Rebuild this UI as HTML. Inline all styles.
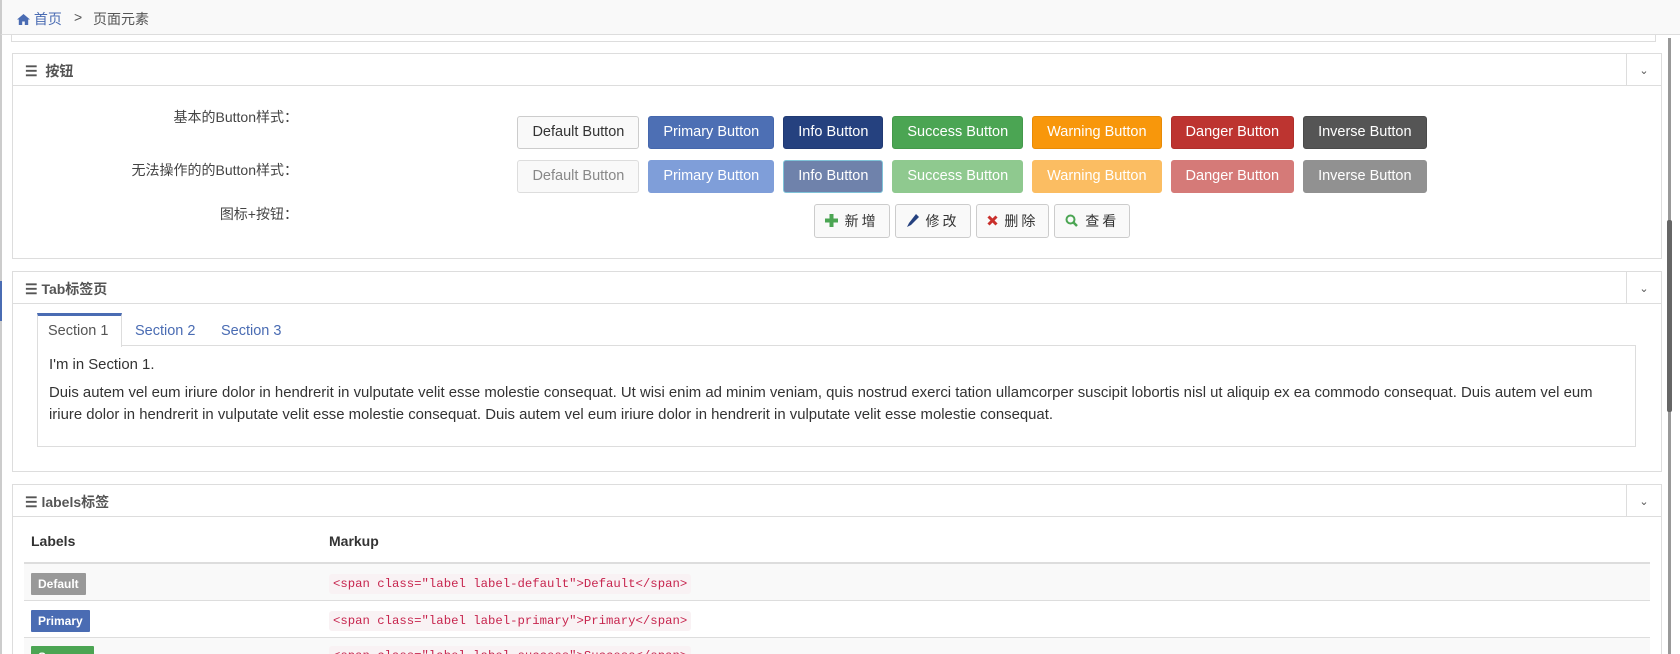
<!DOCTYPE html>
<html><head><meta charset="utf-8">
<style>
*{box-sizing:border-box;margin:0;padding:0}
html{height:654px;overflow:hidden}
body{width:1680px;height:654px;overflow:hidden;background:#fff;font-family:"Liberation Sans","Noto Sans CJK SC",sans-serif;font-size:14px;color:#333;position:relative}
.abs{position:absolute}
.bc{left:0;top:0;width:1680px;height:35px;background:#f9f9f9;border-bottom:1px solid #ddd;border-left:2px solid #ccc}
.bc span{position:absolute;top:9px;font-size:14px}
.leftline{left:0;top:35px;width:2px;height:619px;background:#ccc}
.leftblue{left:0;top:281px;width:2px;height:40px;background:#4a6cb3}
.panel{position:absolute;left:12px;width:1650px;border:1px solid #ddd;background:#fff}
.ph{height:32px;border-bottom:1px solid #ddd;position:relative}
.ph .t{position:absolute;left:12px;top:7px;font-weight:bold;color:#555;font-size:14px}
.ph .c{position:absolute;right:0;top:0;width:35px;height:31px;border-left:1px solid #ddd;color:#555;text-align:center;font-size:11px;line-height:34px}
.lbl{position:absolute;width:298px;text-align:right;font-size:14px;color:#444}
.row{position:absolute;left:310px;width:1324px;display:flex;justify-content:center;gap:9px}
.btn{height:33px;padding:0 14px;border-radius:3px;border:1px solid transparent;color:#fff;font-size:14.5px;line-height:31px;white-space:nowrap}
.d{background:#f9f9f9;border-color:#ccc;color:#333}
.p{background:#4d6fb4;border-color:#4567ad}
.i{background:#25417f;border-color:#213a73}
.s{background:#4ba553;border-color:#44994b}
.w{background:#f8970b;border-color:#e88b06}
.dg{background:#bd3430;border-color:#b02f2b}
.iv{background:#555;border-color:#4a4a4a}
.dis .d{color:#888;border-color:#ddd}
.dis .p{background:#7f9ed9;border-color:#7f9ed9}
.dis .i{background:#6f82ab;border-color:#7fc3d8}
.dis .s{background:#8fc98f;border-color:#8fc98f}
.dis .w{background:#fbbd62;border-color:#fbbd62}
.dis .dg{background:#d57a78;border-color:#d57a78}
.dis .iv{background:#919191;border-color:#919191}
.ib{height:34px;padding:0 10px;border:1px solid #ccc;border-radius:3px;background:#f9f9f9;line-height:32px;font-size:14px;letter-spacing:3px;color:#333;white-space:nowrap}
.tab{position:absolute;top:0;height:33px;line-height:32px;font-size:14.5px;color:#4a6cb3;white-space:nowrap}
.tabbox{position:absolute;left:37px;top:346px;width:1599px;height:101px;border:1px solid #ddd;padding:8px 11px;font-size:14.9px;color:#333;line-height:22px}
.lab{display:inline-block;color:#fff;font-weight:bold;font-size:12px;padding:0 7px;height:22px;line-height:22px;border-radius:1px}
code{font-family:"Liberation Mono",monospace;font-size:12.3px;color:#c7254e;background:#f9f2f4;padding:3px 4px;border-radius:3px}
</style></head><body>
<div class="abs bc">
 <span style="left:15px;color:#4a6cb3"><svg width="13" height="11" viewBox="0 0 13 11" style="vertical-align:-1px"><path d="M6.5 0L0 5.5h1.8V11h3.4V7.5h2.6V11h3.4V5.5H13z" fill="#4a6cb3"/></svg> 首页</span>
 <span style="left:72px;color:#555">&gt;</span>
 <span style="left:91px;color:#555">页面元素</span>
</div>
<div class="abs leftline"></div>
<div class="abs leftblue"></div>
<div class="abs" style="left:11px;top:35px;width:1645px;height:7px;border:1px solid #ddd;border-top:none"></div>
<div class="abs" style="left:1668px;top:38px;width:3px;height:616px;background:#999"></div>
<div class="abs" style="left:1667px;top:220px;width:5px;height:192px;background:#666;border-radius:2px"></div>

<div class="panel" style="top:53px;height:206px">
 <div class="ph"><span class="t">☰&nbsp; 按钮</span><span class="c">⌄</span></div>
</div>
<div class="lbl" style="top:107px">基本的Button样式：</div>
<div class="lbl" style="top:160px">无法操作的的Button样式：</div>
<div class="lbl" style="top:204px">图标+按钮：</div>
<div class="row" style="top:116px">
 <div class="btn d">Default Button</div><div class="btn p">Primary Button</div><div class="btn i">Info Button</div><div class="btn s">Success Button</div><div class="btn w">Warning Button</div><div class="btn dg">Danger Button</div><div class="btn iv">Inverse Button</div>
</div>
<div class="row dis" style="top:160px">
 <div class="btn d">Default Button</div><div class="btn p">Primary Button</div><div class="btn i">Info Button</div><div class="btn s">Success Button</div><div class="btn w">Warning Button</div><div class="btn dg">Danger Button</div><div class="btn iv">Inverse Button</div>
</div>
<div class="row" style="top:204px;gap:5px">
 <div class="ib"><svg width="13" height="13" viewBox="0 0 13 13" style="vertical-align:-1px"><path d="M4.5 0h4v4.5H13v4H8.5V13h-4V8.5H0v-4h4.5z" fill="#4ba553"/></svg> 新增</div>
 <div class="ib"><svg width="13" height="13" viewBox="0 0 13 13" style="vertical-align:-1px"><path d="M10 0l3 3-8 8-4 2 2-4z" fill="#25417f"/></svg> 修改</div>
 <div class="ib"><svg width="11" height="11" viewBox="0 0 11 11" style="vertical-align:0"><path d="M1.5 1.5l8 8M9.5 1.5l-8 8" stroke="#c9302c" stroke-width="3"/></svg> 删除</div>
 <div class="ib"><svg width="13" height="13" viewBox="0 0 13 13" style="vertical-align:-1px"><circle cx="5.5" cy="5.5" r="4" stroke="#4ba553" stroke-width="2" fill="none"/><path d="M8.5 8.5l3.5 3.5" stroke="#4ba553" stroke-width="2.5"/></svg> 查看</div>
</div>

<div class="panel" style="top:271px;height:201px">
 <div class="ph"><span class="t">☰ Tab标签页</span><span class="c">⌄</span></div>
</div>
<div class="abs" style="left:37px;top:345px;width:1599px;height:1px;background:#ddd"></div>
<div class="abs" style="left:37px;top:313px;width:85px;height:34px;border:1px solid #ddd;border-top:3px solid #4a6cb3;border-bottom:none;background:#fff"></div>
<div class="tab" style="left:48px;top:315px;color:#555">Section 1</div>
<div class="tab" style="left:135px;top:315px">Section 2</div>
<div class="tab" style="left:221px;top:315px">Section 3</div>
<div class="tabbox" style="border-top:none">
 <p style="margin-bottom:6px">I'm in Section 1.</p>
 <p>Duis autem vel eum iriure dolor in hendrerit in vulputate velit esse molestie consequat. Ut wisi enim ad minim veniam, quis nostrud exerci tation ullamcorper suscipit lobortis nisl ut aliquip ex ea commodo consequat. Duis autem vel eum iriure dolor in hendrerit in vulputate velit esse molestie consequat. Duis autem vel eum iriure dolor in hendrerit in vulputate velit esse molestie consequat.</p>
</div>

<div class="panel" style="top:484px;height:170px;border-bottom:none">
 <div class="ph"><span class="t">☰ labels标签</span><span class="c">⌄</span></div>
</div>
<div class="abs" style="left:31px;top:533px;font-weight:bold;font-size:14px">Labels</div>
<div class="abs" style="left:329px;top:533px;font-weight:bold;font-size:14px">Markup</div>
<div class="abs" style="left:24px;top:562px;width:1626px;height:2px;background:#ddd"></div>
<div class="abs" style="left:24px;top:564px;width:1626px;height:37px;background:#f9f9f9;border-bottom:1px solid #ddd"></div>
<div class="abs" style="left:24px;top:601px;width:1626px;height:37px;border-bottom:1px solid #ddd"></div>
<div class="abs" style="left:24px;top:638px;width:1626px;height:16px;background:#f9f9f9"></div>
<div class="abs" style="left:31px;top:573px"><span class="lab" style="background:#999">Default</span></div>
<div class="abs" style="left:31px;top:610px"><span class="lab" style="background:#4a6cb3">Primary</span></div>
<div class="abs" style="left:31px;top:646px;height:8px;overflow:hidden"><span class="lab" style="background:#4ba553">Success</span></div>
<div class="abs" style="left:329px;top:574px"><code>&lt;span class="label label-default"&gt;Default&lt;/span&gt;</code></div>
<div class="abs" style="left:329px;top:611px"><code>&lt;span class="label label-primary"&gt;Primary&lt;/span&gt;</code></div>
<div class="abs" style="left:329px;top:646px;height:8px;overflow:hidden"><code>&lt;span class="label label-success"&gt;Success&lt;/span&gt;</code></div>
</body></html>
